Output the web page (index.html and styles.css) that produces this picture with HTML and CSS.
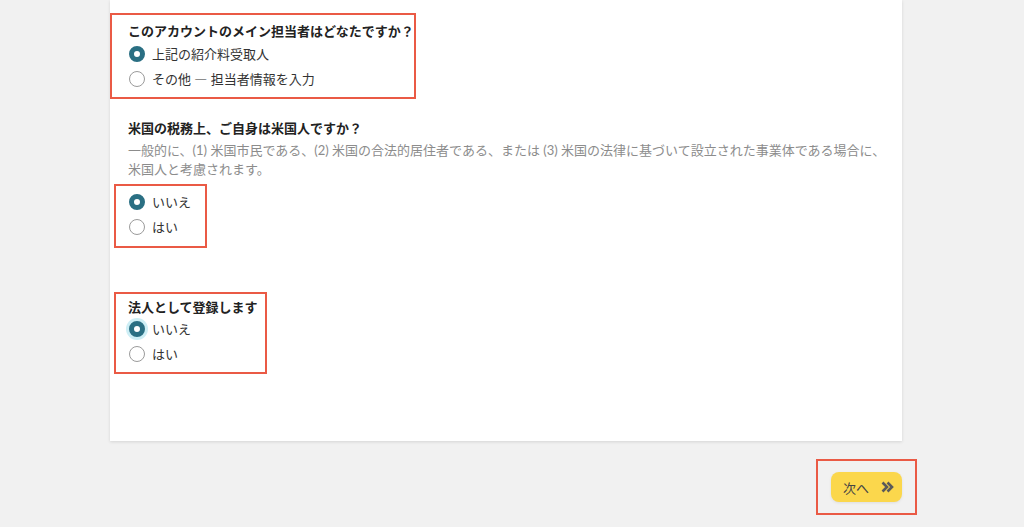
FILE: index.html
```html
<!DOCTYPE html>
<html lang="ja">
<head>
<meta charset="utf-8">
<title>登録</title>
<link rel="stylesheet" href="styles.css">
</head>
<body>
<div class="page">
  <main class="card">
    <section class="group g1">
      <h3 class="q">このアカウントのメイン担当者はどなたですか？</h3>
      <div class="opts">
        <label class="opt"><span class="radio on"></span><span>上記の紹介料受取人</span></label>
        <label class="opt"><span class="radio"></span><span>その他 <span class="dash">—</span> 担当者情報を入力</span></label>
      </div>
    </section>
    <section class="group g2">
      <h3 class="q">米国の税務上、ご自身は米国人ですか？</h3>
      <p class="desc">一般的に、(1) 米国市民である、(2) 米国の合法的居住者である、または (3) 米国の法律に基づいて設立された事業体である場合に、米国人と考慮されます。</p>
      <div class="opts opts2">
        <label class="opt"><span class="radio on"></span><span>いいえ</span></label>
        <label class="opt"><span class="radio"></span><span>はい</span></label>
      </div>
    </section>
    <section class="group g3">
      <h3 class="q">法人として登録します</h3>
      <div class="opts opts3">
        <label class="opt"><span class="radio on focus"></span><span>いいえ</span></label>
        <label class="opt"><span class="radio"></span><span>はい</span></label>
      </div>
    </section>
  </main>
  <div class="actions">
    <button class="next" type="button">次へ
      <svg class="chev" width="13" height="12" viewBox="0 0 13 12" aria-hidden="true"><path d="M1.5 1.5 L6 6 L1.5 10.5 M6.5 1.5 L11 6 L6.5 10.5" fill="none" stroke="#5a5a5a" stroke-width="2.6" stroke-linejoin="miter" stroke-linecap="butt"/></svg>
    </button>
  </div>
  <div class="mark m1"></div>
  <div class="mark m2"></div>
  <div class="mark m3"></div>
  <div class="mark m4"></div>
</div>
</body>
</html>
```

FILE: styles.css
```css
* { box-sizing: border-box; }
html, body { margin: 0; padding: 0; }
body {
  background: #f1f1f1;
  font-family: Lato, "Noto Sans CJK JP", sans-serif;
  font-size: 13px;
  color: #333;
  width: 1024px;
  height: 527px;
  overflow: hidden;
}
.page { position: relative; height: 527px; }
.card {
  margin-left: 110px;
  width: 792px;
  height: 441px;
  background: #fff;
  box-shadow: 0 1px 3px rgba(0,0,0,0.12);
  padding: 21px 8px 0 18px;
}
.q {
  margin: 0;
  font-size: 13px;
  font-weight: 700;
  line-height: 20px;
  color: #222;
}
.desc {
  margin: 3px 0 0;
  color: #8c8c8c;
  line-height: 19px;
  font-size: 13px;
}
.dash { font-family: "Noto Sans CJK JP", sans-serif; }
.opts { display: flex; flex-direction: column; margin-top: 0; }
.opt {
  display: flex;
  align-items: center;
  gap: 7px;
  height: 25px;
  color: #333;
}
.radio {
  width: 16px;
  height: 16px;
  border-radius: 50%;
  border: 1.5px solid #9b9b9b;
  background: #fff;
  margin-left: 1px;
  flex: none;
}
.radio.on {
  border: 5px solid #2a6f83;
  background: #fff;
}
.radio.focus { box-shadow: 0 0 0 3px #cdeef5; }
.g2 { margin-top: 27px; }
.opts2 { margin-top: 10px; }
.g3 { margin-top: 58px; }
.opts3 { margin-top: -1px; }
.actions {
  width: 902px;
  display: flex;
  justify-content: flex-end;
  margin-top: 31px;
}
.next {
  height: 30px;
  width: 71px;
  border: none;
  border-radius: 8px;
  background: #fbd74c;
  box-shadow: 0 1px 3px rgba(0,0,0,0.08);
  font-family: Lato, "Noto Sans CJK JP", sans-serif;
  font-size: 13px;
  color: #444;
  display: flex;
  align-items: center;
  padding: 0 0 0 12px;
  gap: 12px;
}
.chev { display: block; }
.mark {
  position: absolute;
  border: 2px solid #ea5a45;
  pointer-events: none;
}
.m1 { left: 110px; top: 13px; width: 306px; height: 86px; }
.m2 { left: 114px; top: 184px; width: 93px; height: 64px; }
.m3 { left: 114px; top: 292px; width: 153px; height: 82px; }
.m4 { left: 816px; top: 459px; width: 101px; height: 56px; }
```
